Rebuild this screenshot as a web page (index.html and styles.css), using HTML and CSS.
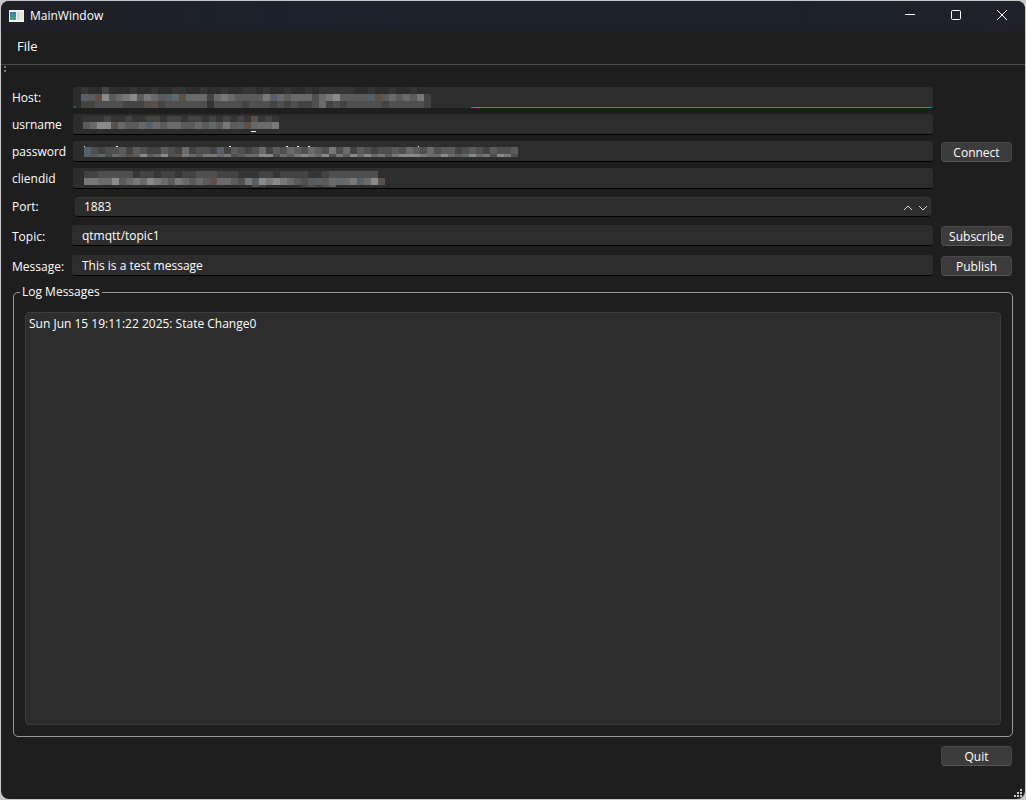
FILE: index.html
```html
<!DOCTYPE html>
<html lang="en">
<head>
    <meta charset="UTF-8">
    <title>MainWindow</title>
    <meta name="viewport" content="width=device-width, initial-scale=1.0">
    <link rel="stylesheet" href="styles.css">
</head>
<body>

    <div class="window">
        <header class="titlebar">
            <svg class="app-icon" width="15" height="12" viewBox="0 0 15 12">
                <defs>
                    <linearGradient id="pane" x1="0" y1="0" x2="0" y2="1">
                        <stop offset="0" stop-color="#3d77a8"/>
                        <stop offset="1" stop-color="#4fa878"/>
                    </linearGradient>
                </defs>
                <rect width="15" height="12" fill="#f2f2f2"/>
                <rect x="1" y="2" width="6" height="8" fill="url(#pane)"/>
                <rect x="8" y="2" width="3" height="8" fill="#d4d6da"/>
                <rect x="12" y="2" width="2" height="8" fill="#dfe1e4"/>
            </svg>
            <span class="title">MainWindow</span>
            <button class="win-btn" aria-label="Minimize">
                <svg width="12" height="12"><path d="M1 5.5h10" stroke="#fff"/></svg>
            </button>
            <button class="win-btn" aria-label="Maximize">
                <svg width="12" height="12"><rect x="1.5" y="1.5" width="9" height="9" rx="1" fill="none" stroke="#fff"/></svg>
            </button>
            <button class="win-btn" aria-label="Close">
                <svg width="12" height="12"><path d="M1 1l10 10M11 1L1 11" stroke="#fff"/></svg>
            </button>
        </header>

        <nav class="menubar">
            <button class="menu-item">File</button>
        </nav>
        <div class="toolbar">
            <svg width="2" height="6"><path d="M0 1h2M0 5h2" stroke="#d0d0d0" stroke-width="1"/></svg>
        </div>

        <main class="content">
            <div class="credentials">
                <div class="row">
                    <label for="host">Host:</label>
                    <div class="field">
                        <input id="host" class="focused" type="text">
                        <svg class="mosaic" data-name="host" width="398" height="21"></svg>
                    </div>
                </div>
                <div class="row">
                    <label for="username">usrname</label>
                    <div class="field">
                        <input id="username" type="text">
                        <svg class="mosaic" data-name="username" width="398" height="20"></svg>
                    </div>
                </div>
                <div class="row">
                    <label for="password">password</label>
                    <div class="field">
                        <input id="password" type="text">
                        <svg class="mosaic" data-name="password" width="460" height="20"></svg>
                    </div>
                    <button class="btn">Connect</button>
                </div>
                <div class="row">
                    <label for="client">cliendid</label>
                    <div class="field">
                        <input id="client" type="text">
                        <svg class="mosaic" data-name="client" width="398" height="20"></svg>
                    </div>
                </div>
            </div>

            <div class="row port-row">
                <label for="port">Port:</label>
                <div class="spinbox">
                    <input id="port" type="number" value="1883">
                    <button class="spin" aria-label="Increase">
                        <svg width="10" height="6"><path d="M1 5l4-4 4 4" fill="none" stroke="#b8e2f2"/></svg>
                    </button>
                    <button class="spin" aria-label="Decrease">
                        <svg width="10" height="6"><path d="M1 1l4 4 4-4" fill="none" stroke="#b8e2f2"/></svg>
                    </button>
                </div>
            </div>
            <div class="row tall">
                <label for="topic">Topic:</label>
                <div class="field">
                    <input id="topic" type="text" value="qtmqtt/topic1">
                </div>
                <button class="btn">Subscribe</button>
            </div>
            <div class="row tall">
                <label for="message">Message:</label>
                <div class="field">
                    <input id="message" type="text" value="This is a test message">
                </div>
                <button class="btn">Publish</button>
            </div>

            <fieldset class="log">
                <legend>Log Messages</legend>
                <textarea aria-label="Log Messages" readonly>Sun Jun 15 19:11:22 2025: State Change0</textarea>
            </fieldset>

            <div class="footer">
                <button class="btn">Quit</button>
            </div>
        </main>

        <svg class="grip" width="8" height="8" fill="#c8c8c8">
            <path d="M6 0h2v2h-2zM3 3h2v2h-2zM6 3h2v2h-2zM0 6h2v2h-2zM3 6h2v2h-2zM6 6h2v2h-2z"/>
        </svg>
    </div>

    <script src="mosaic.js"></script>
</body>
</html>
```
FILE: styles.css
```css
* {
    box-sizing: border-box;
}
body {
    margin: 0;
    padding: 1px;
    min-height: 100vh;
    display: flex;
    background: #c6c9c8;
    color: #fff;
    font-family: 'Open Sans', 'Segoe UI', sans-serif;
    font-size: 12px;
}
button, input, textarea {
    font: inherit;
    color: inherit;
    margin: 0;
    outline: none;
}
.window {
    flex: 1;
    display: flex;
    flex-direction: column;
    position: relative;
    background: #1e1e1e;
    border-radius: 8px;
    overflow: hidden;
}

/* title bar, menu and toolbar */
.titlebar {
    display: flex;
    align-items: center;
    height: 30px;
    padding-left: 8px;
    background: linear-gradient(90deg, #201f27 0%, #1b222b 30%, #1b222a 75%, #20202a 100%);
}
.title {
    flex: 1;
    margin-left: 6px;
    padding-bottom: 2px;
}
.win-btn {
    display: flex;
    justify-content: center;
    align-items: center;
    width: 46px;
    height: 30px;
    padding: 0 0 2px;
    border: none;
    background: none;
}
.menubar {
    height: 34px;
    padding: 3px 6px;
    border-bottom: 1px solid #4b4b4b;
}
.menu-item {
    height: 24px;
    padding: 0 10px;
    border: none;
    background: none;
    font-size: 13px;
}
.toolbar {
    display: flex;
    align-items: center;
    height: 9px;
    padding-left: 3px;
    border-bottom: 1px solid #1a1a1a;
}

/* form */
.content {
    flex: 1;
    display: flex;
    flex-direction: column;
    gap: 8px;
    padding: 13px 13px 33px 11px;
}
.credentials {
    display: flex;
    flex-direction: column;
    gap: 6px;
}
.row {
    display: grid;
    grid-template-columns: 60px 1fr 71px;
    height: 21px;
}
.row label {
    align-self: center;
    line-height: 20px;
}
.field {
    position: relative;
    display: flex;
    height: 21px;
    margin-right: 8px;
}
.credentials .field {
    margin-left: 1px;
}
.field input {
    width: 100%;
    padding: 0 10px;
    border: none;
    border-bottom: 1px solid #000;
    border-radius: 3px;
    background: #2d2d2d;
}
.field .focused {
    border-bottom-color: #00a5b0;
}
.mosaic {
    position: absolute;
    left: 0;
    top: 0;
}
.btn {
    align-self: end;
    width: 71px;
    height: 20px;
    padding: 1px 0 0;
    border: 1px solid #484848;
    border-bottom-color: #555;
    border-radius: 4px;
    background: #3c3c3c;
    line-height: 17px;
}
.tall {
    height: 22px;
}
.tall .btn {
    align-self: center;
}
.tall label {
    align-self: end;
}
.port-row {
    height: 20px;
}
.spinbox {
    display: flex;
    align-items: center;
    margin: 0 10px 0 3px;
    border: 1px solid #363636;
    border-bottom-color: #000;
    border-radius: 4px;
    background: #2d2d2d;
}
.spinbox input {
    flex: 1;
    height: 18px;
    padding: 0 8px 2px;
    border: none;
    background: none;
    appearance: textfield;
    -moz-appearance: textfield;
}
.spinbox input::-webkit-inner-spin-button {
    display: none;
}
.spin {
    display: flex;
    justify-content: center;
    align-items: center;
    width: 15px;
    height: 18px;
    padding: 2px 0 0;
    border: none;
    background: none;
}

/* log */
.log {
    flex: 1;
    display: flex;
    margin: -2px -1px 1px 1px;
    min-width: 0;
    padding: 11px;
    border: 1px solid #9a9a9a;
    border-radius: 5px;
}
.log legend {
    margin-left: -5px;
    padding: 0 2px;
    line-height: 18px;
    height: 18px;
}
.log textarea {
    flex: 1;
    padding: 3px;
    border: 1px solid #3c3c3c;
    border-radius: 4px;
    background: #2d2d2d;
    line-height: 16px;
    resize: none;
}
.footer {
    display: flex;
    justify-content: flex-end;
}
.grip {
    position: absolute;
    right: 3px;
    bottom: 2px;
}
```
FILE: mosaic.js
```js
// Masked values: every letter is one 7px block of this colour, a dot is empty
const colors = {
    a: '#353535', b: '#434343', c: '#4f4f4f', d: '#5b5b5b', e: '#6a6a6a',
    f: '#787878', g: '#8a8a8a', u: '#56606b', n: '#5e4f47', t: '#5d6b6d'
};

const mosaics = {
    host: {
        cover: true,
        x: 8,
        rows: [
            [0, 7, 'a..b...a..a..aa..a..a..aa.a..a..a.aaaaa..a..a..a.'],
            [7, 7, 'udngdefgdfedutneeebefeddddfuedeeecefgddddundededfb'],
            [14, 7, 'bbccccbbbcnbccccccaccccbcccbcbcbbcebcbcccccbcccccb'],
        ]
    },
    username: {
        x: 10,
        rows: [
            [2, 6, 'aaabaabaabbabbabbabababanaba'],
            [8, 7, 'deggneddeuedeeddedtdfdunteef'],
        ],
        marks: [[178, 17, 5]]
    },
    password: {
        x: 11,
        rows: [
            [6, 7, 'ucbccdbdcbbdcbebccbubdcbcebdcedcedcfcebdcbccdcedcecddbcdcbdccd'],
            [13, 3, 'udtceundgdegcnfedffefcdeeggcedfgfegcfdgegefdfgggfeegedtgefcgfc'],
        ],
        marks: [[11, 5, 1], [43, 5, 2], [156, 5, 2], [213, 5, 2], [224, 5, 2], [235, 5, 2], [345, 5, 1]]
    },
    client: {
        x: 11,
        rows: [
            [3, 7, 'bbcccccabbabbabbcccbbbaaabbabbbbaabccccccccc'.slice(0, 42)],
            [10, 7, 'ffeegdefegfedfededneedcfugfgfedcdudetefuegcdun'.slice(0, 42) + 'n'],
            [17, 2, '........................cb.....bcbcu......'],
        ]
    }
};

function addRect(svg, x, y, w, h, color) {
    const rect = document.createElementNS('http://www.w3.org/2000/svg', 'rect');
    rect.setAttribute('x', x);
    rect.setAttribute('y', y);
    rect.setAttribute('width', w);
    rect.setAttribute('height', h);
    rect.setAttribute('fill', color);
    svg.appendChild(rect);
}

document.querySelectorAll('.mosaic').forEach(svg => {
    const m = mosaics[svg.dataset.name];
    if (m.cover) {
        addRect(svg, 3, 1, 395, 20, '#2d2d2d');
    }
    for (const [y, h, cells] of m.rows) {
        [...cells].forEach((c, i) => {
            if (colors[c]) addRect(svg, m.x + i * 7, y, 7, h, colors[c]);
        });
    }
    for (const [x, y, w] of m.marks || []) {
        addRect(svg, x, y, w, 1, '#f0f0f0');
    }
});
```
